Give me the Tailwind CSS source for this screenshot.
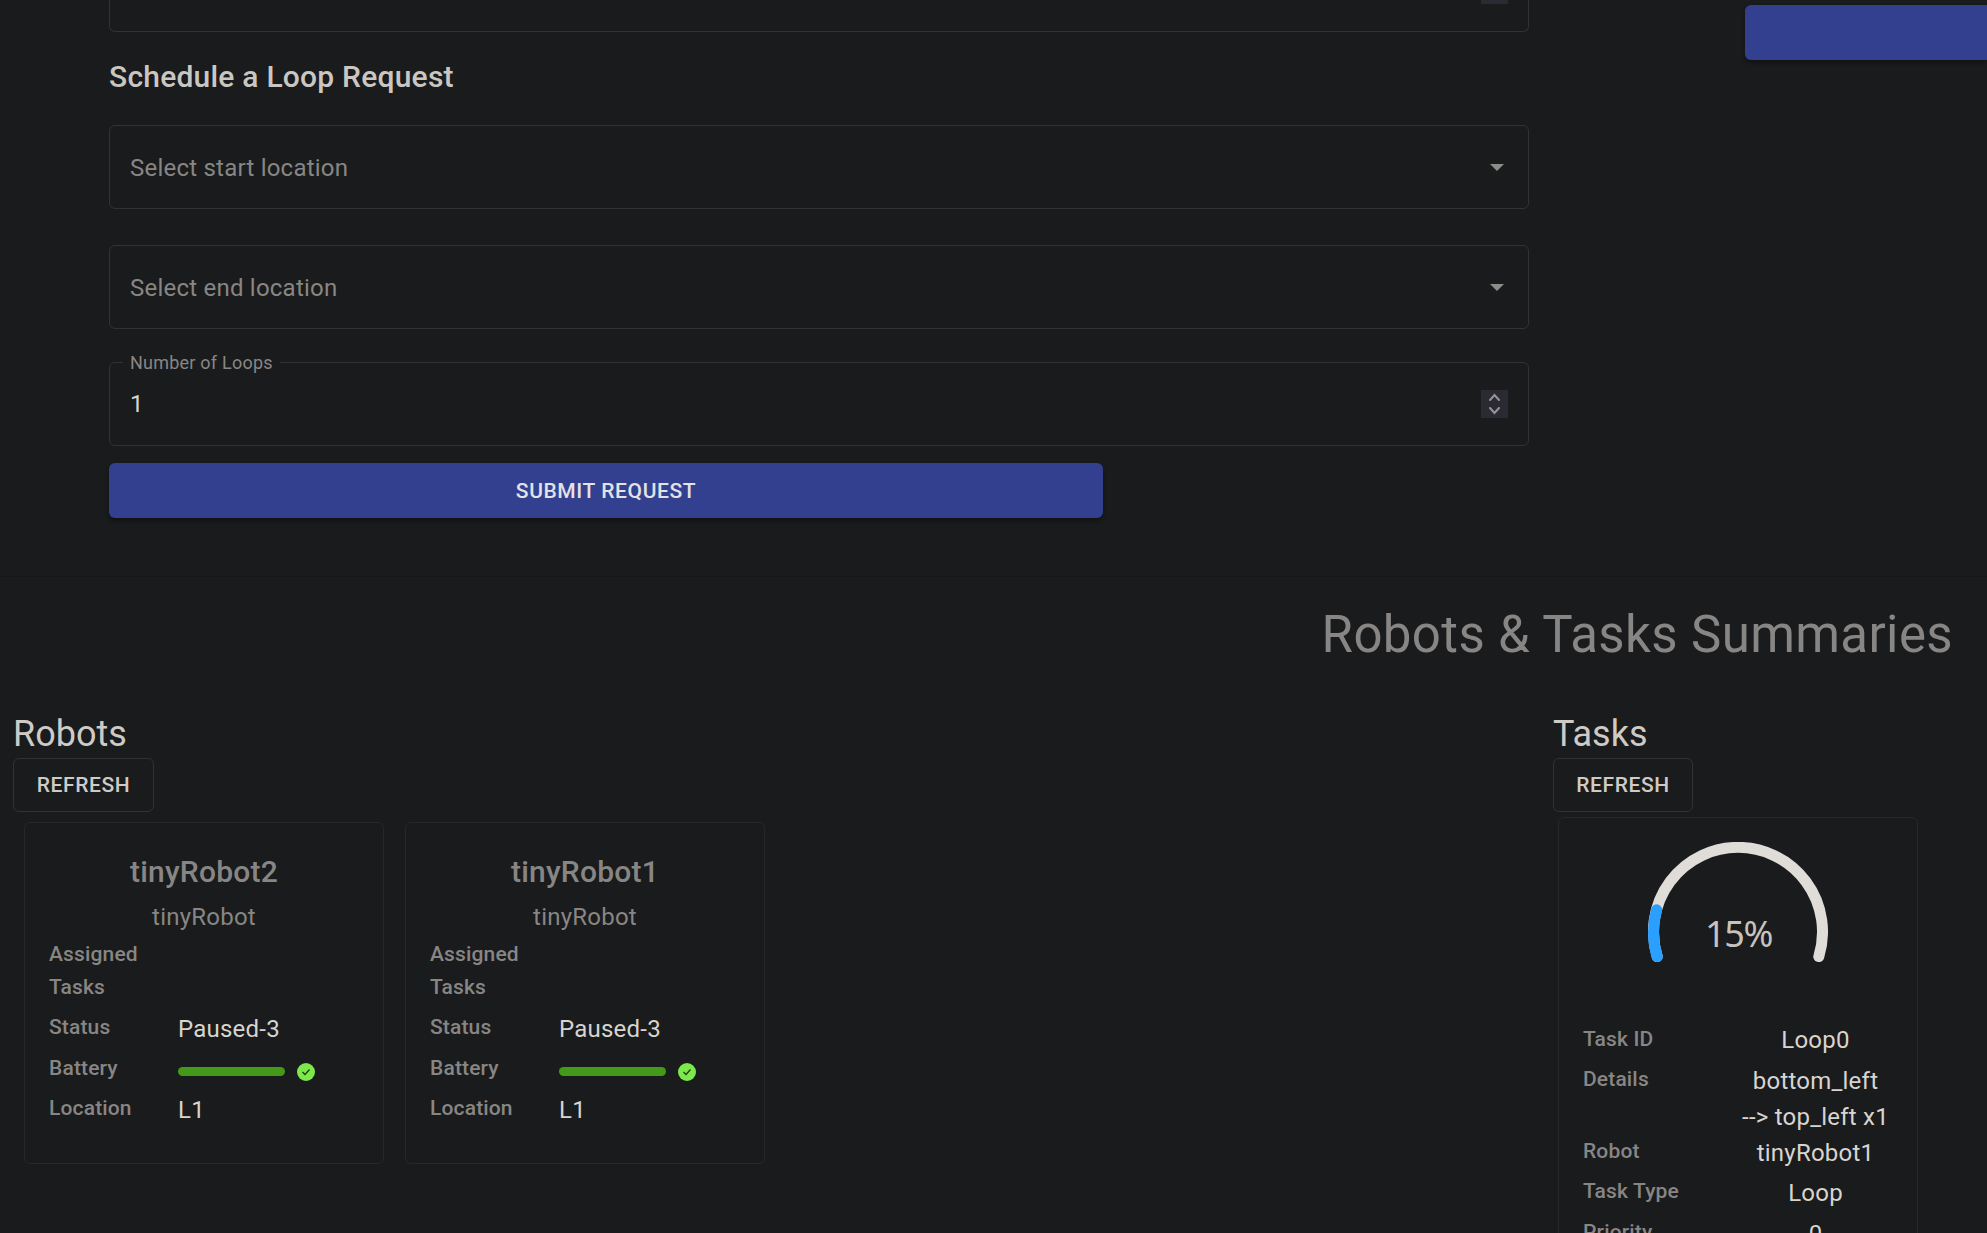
<!DOCTYPE html>
<html lang="en">
<head>
<meta charset="utf-8">
<title>Robots &amp; Tasks</title>
<script src="https://cdn.jsdelivr.net/npm/@tailwindcss/browser@4"></script>
</head>
<body class="h-[1233px] overflow-hidden bg-[#1a1b1c] font-['Roboto',sans-serif] text-[24px] tracking-[0.00938em] text-[#d8d4cf]">
<!-- Request forms -->
<section class="flex h-[577px] items-start justify-between overflow-hidden border-b border-[#161718] pl-[109px]">
  <form class="w-[1420px]">
    <div class="flex h-8 items-start justify-end rounded-b-[6px] border border-t-0 border-[#303234] pr-5"><div class="h-1 w-[27px] bg-[#2b2a33]"></div></div>
    <h2 class="mt-[21px] h-12 text-[30px] leading-[48px] font-medium tracking-[0.0075em] text-[#cac7c3]">Schedule a Loop Request</h2>
    <div class="mt-6 flex h-[84px] items-center justify-between rounded-[6px] border border-[#303234] pr-6 pl-5 text-[#888684]">
      <span class="pt-[2px]">Select start location</span>
      <svg class="h-[7px] w-[14px]" viewBox="0 0 14 7"><path d="M0 0h14L7 7z" fill="#8e8c89"/></svg>
    </div>
    <div class="mt-9 flex h-[84px] items-center justify-between rounded-[6px] border border-[#303234] pr-6 pl-5 text-[#888684]">
      <span class="pt-[2px]">Select end location</span>
      <svg class="h-[7px] w-[14px]" viewBox="0 0 14 7"><path d="M0 0h14L7 7z" fill="#8e8c89"/></svg>
    </div>
    <div class="relative mt-[33px] flex h-[84px] items-center justify-between rounded-[6px] border border-[#303234] pr-5 pl-5">
      <span class="absolute -top-[12px] left-[13px] bg-[#1a1b1c] px-[7px] text-[18px] leading-6 text-[#888684]">Number of Loops</span>
      <span>1</span>
      <svg class="h-7 w-[27px] bg-[#2b2a33]" viewBox="0 0 27 28" fill="none" stroke="#96939e" stroke-width="2" stroke-linecap="round"><path d="M9 10l4.500-5 4.500 5M9 18l4.500 5 4.500-5"/></svg>
    </div>
    <button type="button" class="mt-[17px] block h-[55px] w-[994px] rounded-[6px] bg-[#334090] pt-[2px] text-[21px] font-medium tracking-[0.02857em] text-[#e3e2e6] shadow-[0_3px_4px_rgba(0,0,0,0.35)]">SUBMIT REQUEST</button>
  </form>
  <div class="mt-[5px] h-[55px] w-[242px] rounded-l-[6px] bg-[#334090] shadow-[0_3px_4px_rgba(0,0,0,0.35)]"></div>
</section>

<!-- Summaries -->
<h1 class="mt-[22px] pr-[34px] text-right text-[51px] leading-[72px] tracking-[0.00735em] text-[#888684]">Robots &amp; Tasks Summaries</h1>
<main class="mt-[38px] flex pl-[13px]">
  <section class="w-[1540px]">
    <h2 class="h-[49px] text-[36px] leading-[51px] tracking-normal text-[#cecbc7]">Robots</h2>
    <button type="button" class="flex h-[54px] w-[141px] items-center justify-center rounded-[6px] border border-[#303234] pt-[2px] text-[21px] font-medium tracking-[0.02857em] text-[#cecbc7]">REFRESH</button>
    <div class="mt-[10px] flex gap-[21px] pl-[11px]">
      <article class="h-[342px] w-[360px] rounded-[6px] border border-[#26282a] px-6 pt-[25px]">
        <h3 class="text-center text-[30px] leading-[48px] font-medium tracking-[0.0075em] text-[#888684]">tinyRobot2</h3>
        <p class="mt-[3px] text-center leading-9 text-[#888684]">tinyRobot</p>
        <dl class="grid grid-cols-[129px_1fr] text-[#d8d4cf]">
          <dt class="h-[73px] w-24 pt-[3px] text-[21px] leading-[33px] font-medium tracking-[0.00714em] text-[#888684]">Assigned Tasks</dt><dd></dd>
          <dt class="h-[41px] pt-[3px] text-[21px] leading-[33px] font-medium tracking-[0.00714em] text-[#888684]">Status</dt><dd class="pt-[3px] leading-9">Paused-3</dd>
          <dt class="h-10 pt-[3px] text-[21px] leading-[33px] font-medium tracking-[0.00714em] text-[#888684]">Battery</dt>
          <dd class="flex h-10 items-center gap-3 pt-[5px]"><span class="h-[9px] w-[107px] rounded-full bg-[#439a18]"></span><svg class="h-[18px] w-[18px]" viewBox="0 0 18 18"><circle cx="9" cy="9" r="9" fill="#7de84a"/><path d="M5.500 9l2.500 2.500 4.500-5" fill="none" stroke="#1f3d16" stroke-width="1.300"/></svg></dd>
          <dt class="pt-[3px] text-[21px] leading-[33px] font-medium tracking-[0.00714em] text-[#888684]">Location</dt><dd class="pt-[3px] leading-9">L1</dd>
        </dl>
      </article>
      <article class="h-[342px] w-[360px] rounded-[6px] border border-[#26282a] px-6 pt-[25px]">
        <h3 class="text-center text-[30px] leading-[48px] font-medium tracking-[0.0075em] text-[#888684]">tinyRobot1</h3>
        <p class="mt-[3px] text-center leading-9 text-[#888684]">tinyRobot</p>
        <dl class="grid grid-cols-[129px_1fr] text-[#d8d4cf]">
          <dt class="h-[73px] w-24 pt-[3px] text-[21px] leading-[33px] font-medium tracking-[0.00714em] text-[#888684]">Assigned Tasks</dt><dd></dd>
          <dt class="h-[41px] pt-[3px] text-[21px] leading-[33px] font-medium tracking-[0.00714em] text-[#888684]">Status</dt><dd class="pt-[3px] leading-9">Paused-3</dd>
          <dt class="h-10 pt-[3px] text-[21px] leading-[33px] font-medium tracking-[0.00714em] text-[#888684]">Battery</dt>
          <dd class="flex h-10 items-center gap-3 pt-[5px]"><span class="h-[9px] w-[107px] rounded-full bg-[#439a18]"></span><svg class="h-[18px] w-[18px]" viewBox="0 0 18 18"><circle cx="9" cy="9" r="9" fill="#7de84a"/><path d="M5.500 9l2.500 2.500 4.500-5" fill="none" stroke="#1f3d16" stroke-width="1.300"/></svg></dd>
          <dt class="pt-[3px] text-[21px] leading-[33px] font-medium tracking-[0.00714em] text-[#888684]">Location</dt><dd class="pt-[3px] leading-9">L1</dd>
        </dl>
      </article>
    </div>
  </section>
  <section>
    <h2 class="h-[49px] text-[36px] leading-[51px] tracking-normal text-[#cecbc7]">Tasks</h2>
    <button type="button" class="flex h-[54px] w-[140px] items-center justify-center rounded-[6px] border border-[#303234] pt-[2px] text-[21px] font-medium tracking-[0.02857em] text-[#cecbc7]">REFRESH</button>
    <article class="mt-[5px] ml-[5px] h-[460px] w-[360px] rounded-[6px] border border-[#26282a] px-6">
      <!-- Progress gauge -->
      <svg class="mx-auto mt-6 h-[126px] w-[180px]" viewBox="0 0 180 126" fill="none" stroke-width="11" stroke-linecap="round">
        <path d="M9.200 114.600A84.500 84.500 0 1 1 170.800 114.600" stroke="#e0ddd8"/>
        <path d="M9.200 114.600A84.500 84.500 0 0 1 8.600 67.700" stroke="#2b9fff"/>
        <text x="90.500" y="105" text-anchor="middle" fill="#c6c3bf" class="font-['Noto_Sans',sans-serif] text-[36px] tracking-[-1.3px]">15%</text>
      </svg>
      <dl class="mt-[51px] grid grid-cols-[155px_1fr]">
        <dt class="h-10 pt-[4px] text-[21px] leading-[33px] font-medium tracking-[0.00714em] text-[#888684]">Task ID</dt><dd class="pt-[3px] text-center leading-9">Loop0</dd>
        <dt class="h-[72px] pt-[4px] text-[21px] leading-[33px] font-medium tracking-[0.00714em] text-[#888684]">Details</dt><dd class="h-[72px] pt-[4px] text-center leading-9">bottom_left<br>--&gt; top_left x1</dd>
        <dt class="h-10 pt-[4px] text-[21px] leading-[33px] font-medium tracking-[0.00714em] text-[#888684]">Robot</dt><dd class="pt-[4px] text-center leading-9">tinyRobot1</dd>
        <dt class="h-[41px] pt-[4px] text-[21px] leading-[33px] font-medium tracking-[0.00714em] text-[#888684]">Task Type</dt><dd class="pt-[4px] text-center leading-9">Loop</dd>
        <dt class="pt-[4px] text-[21px] leading-[33px] font-medium tracking-[0.00714em] text-[#888684]">Priority</dt><dd class="pt-[4px] text-center leading-9">0</dd>
      </dl>
    </article>
  </section>
</main>
</body>
</html>
